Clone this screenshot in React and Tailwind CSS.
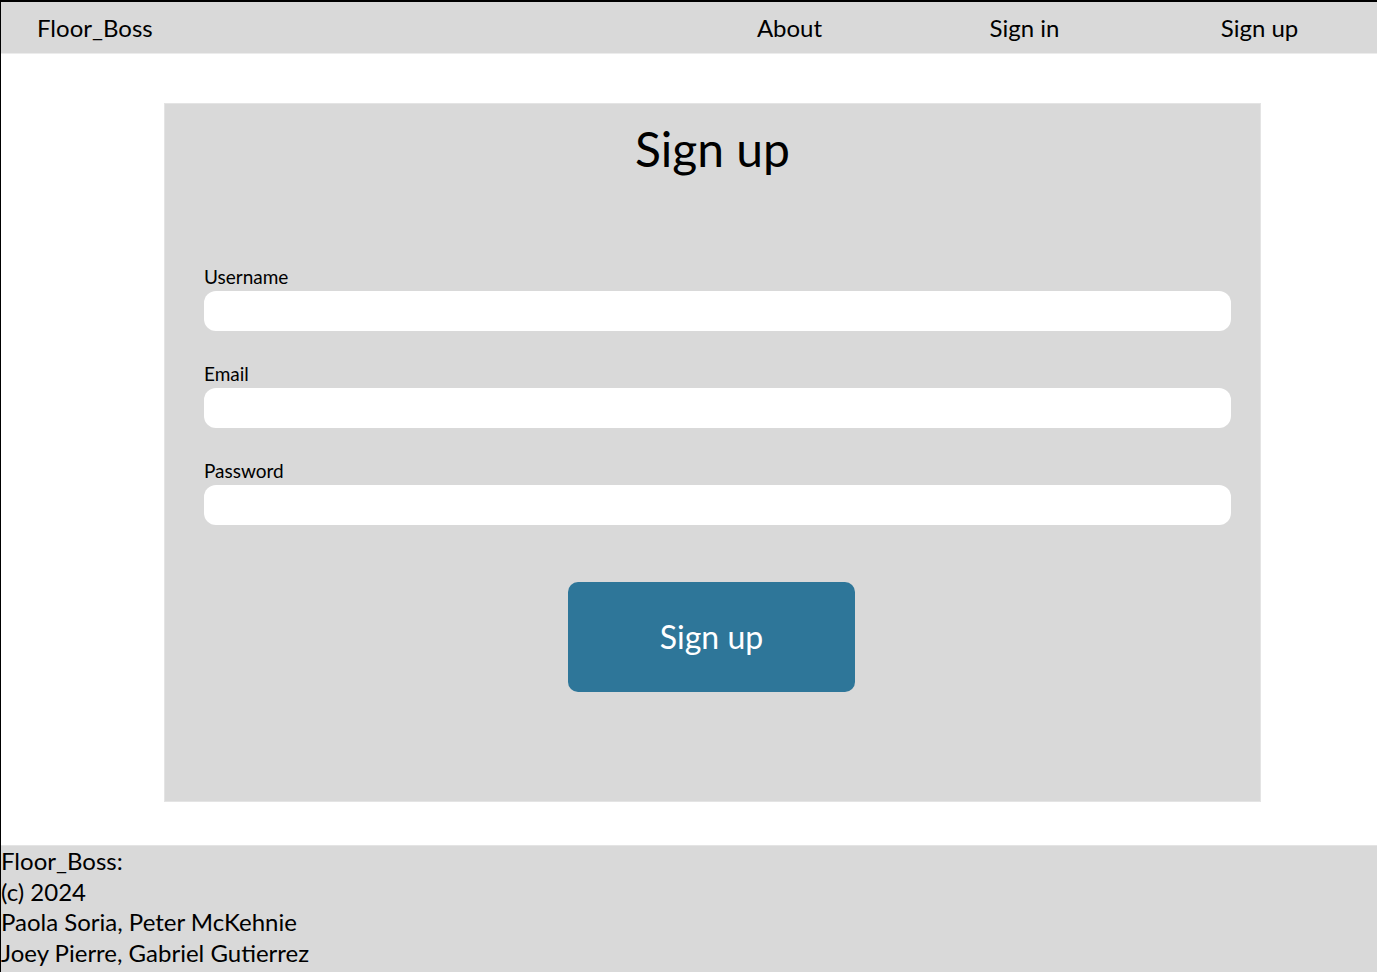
export default function App() {
  const fields = ["Username", "Email", "Password"];

  return (
    <div
      className="min-h-screen flex flex-col bg-white border-l border-t-2 border-black text-black"
      style={{ fontFamily: "Lato, 'Noto Sans', sans-serif" }}
    >
      {/* header */}
      <header className="h-[52px] bg-[#d9d9d9] border-b border-[#ececec] flex items-center justify-between">
        <div className="pl-[36px] text-[24px] leading-none">Floor_Boss</div>
        <nav className="flex">
          <a className="w-[235px] text-center text-[24px] leading-none">About</a>
          <a className="w-[235px] text-center text-[24px] leading-none">Sign in</a>
          <a className="w-[235px] text-center text-[24px] leading-none">Sign up</a>
        </nav>
      </header>

      {/* main */}
      <main className="pt-[49px] pb-[43px] pl-[163px]">
        <div className="w-[1097px] h-[699px] bg-[#d9d9d9] border border-[#e4e4e4] flex flex-col">
          <h1 className="pt-[19px] text-center text-[48px] leading-[52px]">Sign up</h1>

          <form className="pl-[39px] pt-[91px] flex flex-col gap-[32px]">
            {fields.map((f) => (
              <label key={f} className="flex flex-col">
                <span className="text-[19px] leading-[22px] mb-[3px]">{f}</span>
                <input
                  type={f === "Password" ? "password" : "text"}
                  className="w-[1027px] h-[40px] rounded-[12px] bg-white outline-none px-3"
                />
              </label>
            ))}

            <div className="flex justify-center pr-[41px] mt-[25px]">
              <button
                type="button"
                className="w-[287px] h-[110px] rounded-[10px] bg-[#2e7699] text-white text-[32px] leading-none"
              >
                Sign up
              </button>
            </div>
          </form>
        </div>
      </main>

      {/* footer */}
      <footer className="flex-1 bg-[#d9d9d9] border-t border-[#e4e4e4] text-[24px] leading-[30.5px]">
        <p>Floor_Boss:</p>
        <p>(c) 2024</p>
        <p>Paola Soria, Peter McKehnie</p>
        <p>Joey Pierre, Gabriel Gutierrez</p>
      </footer>
    </div>
  );
}
